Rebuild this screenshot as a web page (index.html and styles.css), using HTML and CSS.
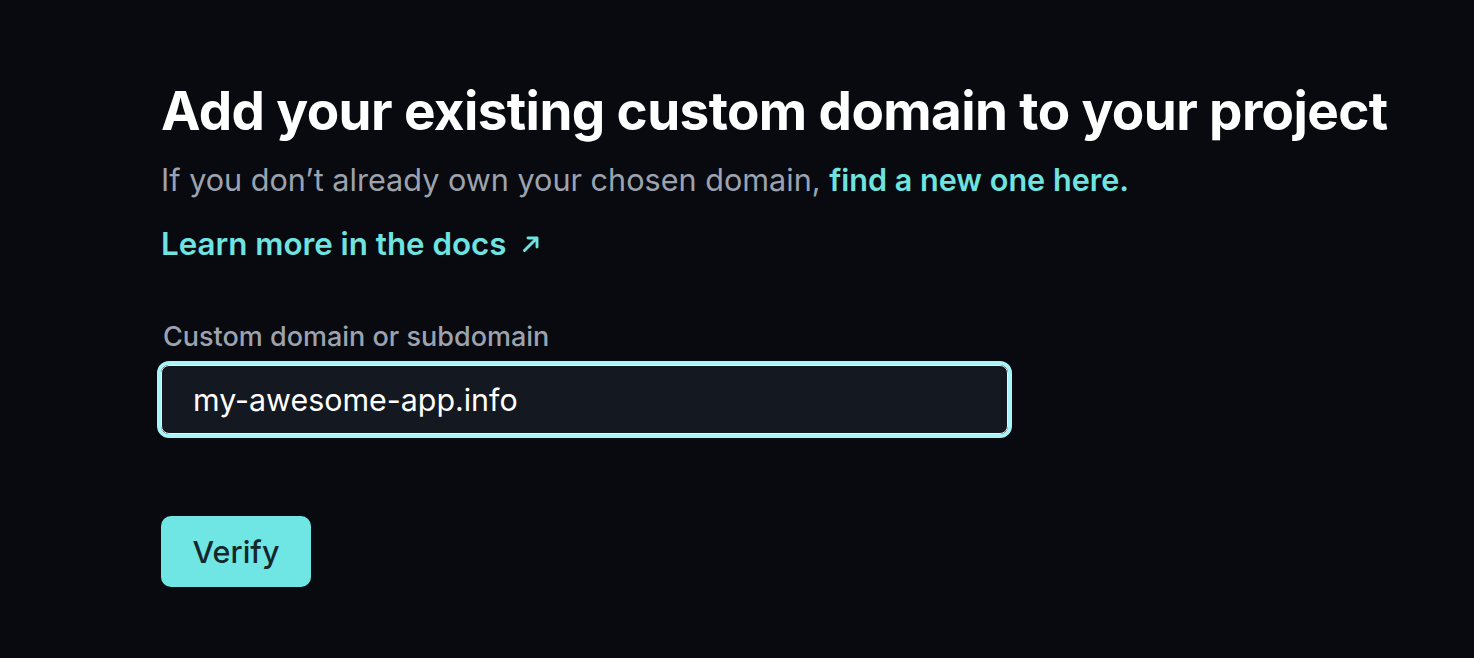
FILE: index.html
```html
<!DOCTYPE html>
<html>
<head>
<meta charset="utf-8">
<link rel="stylesheet" href="styles.css">
</head>
<body>
<main class="page">
  <h1 class="title">Add your existing custom domain to your project</h1>
  <p class="subtitle">If you don’t already own your chosen domain, <a class="link" href="#">find a new one here.</a></p>
  <a class="docs" href="#">Learn more in the docs
    <svg class="arrow" width="20" height="20" viewBox="0 0 20 20" fill="none" stroke="currentColor" stroke-width="2.9" stroke-linecap="round" stroke-linejoin="round"><path d="M3.5 16.5L16 4M7 4H16v9"/></svg>
  </a>
  <form class="form">
    <label class="label" for="domain">Custom domain or subdomain</label>
    <div class="ring"><input id="domain" class="input" type="text" value="my-awesome-app.info"></div>
    <button class="btn" type="button">Verify</button>
  </form>
</main>
</body>
</html>
```
FILE: styles.css
```css
html, body { margin: 0; padding: 0; background: #080a0f; }
body { font-family: Inter, "Noto Sans", sans-serif; color: #fff; }
.page { padding: 77px 0 0 161px; display: flex; flex-direction: column; align-items: flex-start; }
.title { margin: 0; font-size: 53px; font-weight: 700; line-height: 68px; letter-spacing: -0.6px; color: #fff; }
.subtitle { margin: 15px 0 0; font-size: 30.6px; line-height: 40px; color: #9ca3af; font-weight: 400; }
.link { color: #6ee3e0; font-weight: 600; text-decoration: none; }
.docs { margin-top: 24px; color: #6ee3e0; font-weight: 600; font-size: 31.3px; line-height: 40px; text-decoration: none; display: inline-flex; align-items: center; gap: 14px; }
.arrow { width: 20px; height: 20px; }
.form { margin-top: 56px; display: flex; flex-direction: column; align-items: flex-start; }
.label { font-size: 27px; line-height: 34px; font-weight: 500; color: #9ca3af; margin-left: 2px; }
.ring { margin: 7px 0 0 -4px; border: 4px solid #a8f4f8; border-radius: 12px; }
.input { box-sizing: border-box; width: 847px; height: 69px; border: 1.5px solid #eef2f4; border-radius: 8px; background: #141820; color: #fff; font-family: Inter, sans-serif; font-size: 30.4px; padding: 0 0 0 31px; outline: none; display: block; }
.btn { margin-top: 78px; width: 150px; height: 71px; background: #6fe6e3; color: #14282b; border: none; border-radius: 10px; font-family: Inter, sans-serif; font-size: 30.5px; font-weight: 500; }
```
